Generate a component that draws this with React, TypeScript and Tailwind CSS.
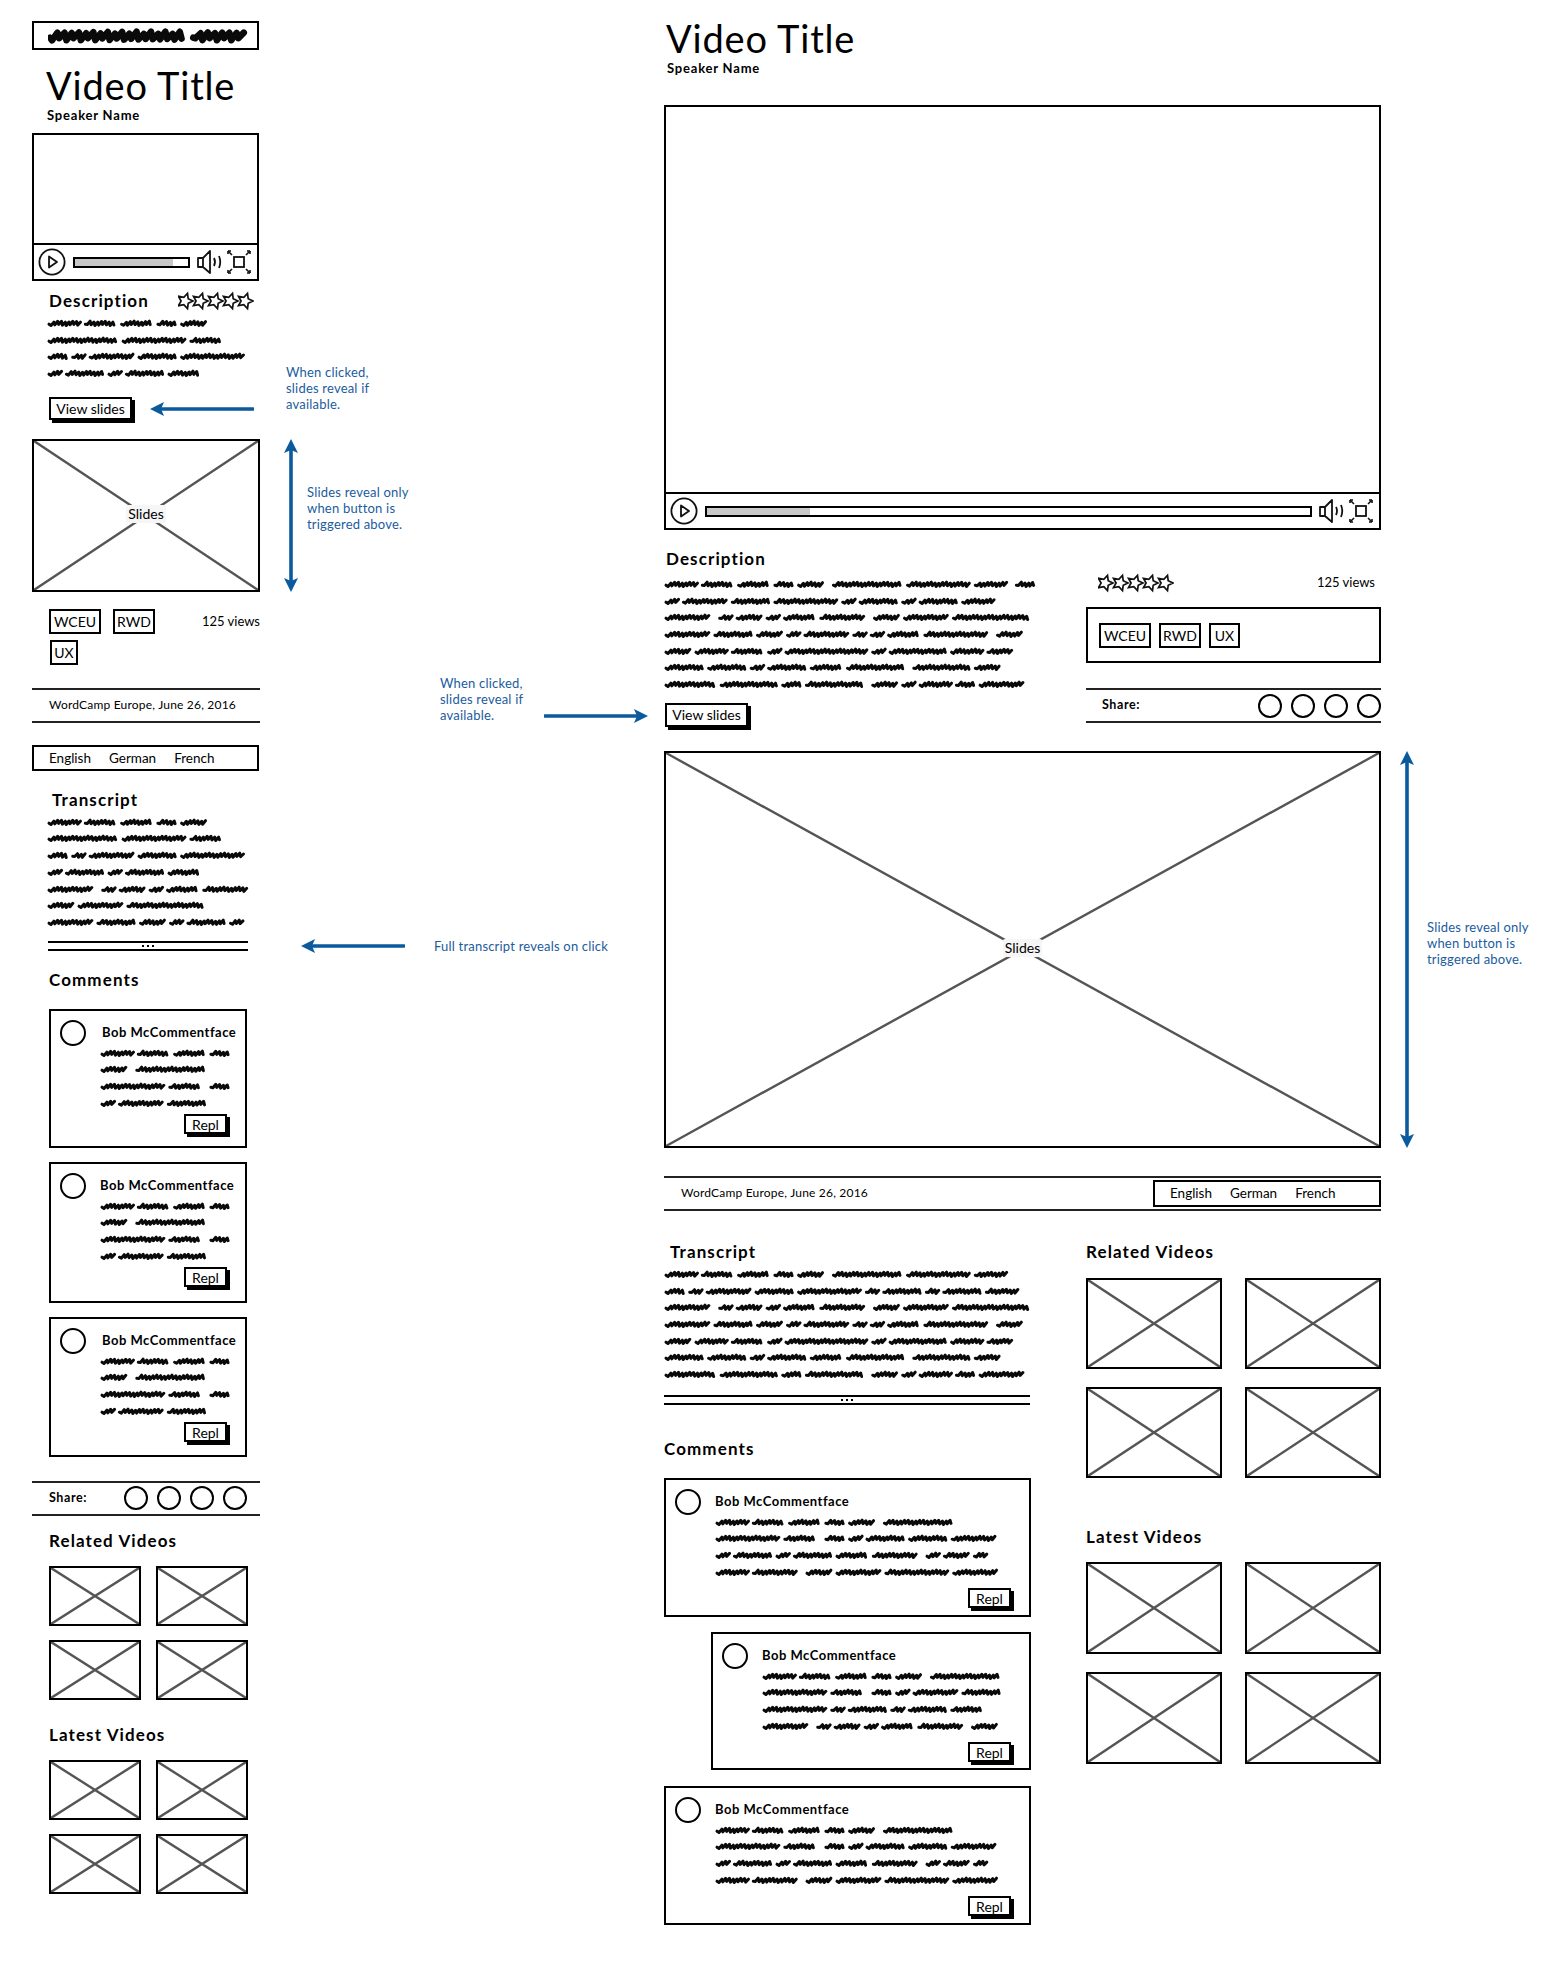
import React from 'react';

const BLUE = '#0b5a9e';

// Redacted body copy in the wireframe is a scribble, one stroke per word.
// A double space in the text stands for the wider gap after a sentence.
const Scribble = ({ text, unit = 6.3, gap = 4.8, amp = 1.6, weight = 3, height = 17, step = 1.9 }: { text: string; unit?: number; gap?: number; amp?: number; weight?: number; height?: number; step?: number }) => {
  let x = 2;
  const mid = height / 2;
  const paths: string[] = [];
  text.split(' ').forEach((word) => {
    if (!word) {
      x += gap;
      return;
    }
    const len = word.length * unit;
    let d = `M${x.toFixed(1)} ${(mid + amp * 0.5).toFixed(1)}`;
    let i = 0;
    for (let p = x + 2; p < x + len - 1; p += step) {
      // lumpy baseline with forward-leaning teeth, like fast handwriting
      const lump = Math.sin(p * 0.42) * amp * 0.35;
      const y = i % 2 ? mid + lump - amp : mid + lump + amp;
      const lean = i % 2 ? step * 0.5 : 0;
      d += ` L${(p + lean).toFixed(1)} ${y.toFixed(1)}`;
      i++;
    }
    paths.push(d);
    x += len + gap;
  });
  return (
    <svg width={x} height={height} className="block shrink-0">
      {paths.map((d, i) => (
        <path key={i} d={d} fill="none" stroke="#0a0a0a" strokeWidth={weight} strokeLinecap="round" strokeLinejoin="round" />
      ))}
    </svg>
  );
};

const ScribbleBlock = ({ lines }: { lines: string[] }) => (
  <div className="flex flex-col">
    {lines.map((l, i) => (
      <Scribble key={i} text={l} height={16.7} />
    ))}
  </div>
);

const Stars = () => {
  const star = (cx: number) => {
    const pts: string[] = [];
    for (let i = 0; i < 10; i++) {
      const r = i % 2 ? 3.9 : 8;
      const a = (i * Math.PI) / 5;
      pts.push(`${(cx + r * Math.cos(a)).toFixed(1)},${(10 + r * Math.sin(a)).toFixed(1)}`);
    }
    return pts.join(' ');
  };
  return (
    <svg width="76" height="20" className="block">
      {[7, 22, 37, 52, 67].map((c) => (
        <polygon key={c} points={star(c)} fill="none" stroke="#111" strokeWidth="1.7" />
      ))}
    </svg>
  );
};

const PlayCircle = () => (
  <svg width="28" height="28" viewBox="0 0 28 28" className="block shrink-0">
    <circle cx="14" cy="14" r="12.6" fill="none" stroke="#111" strokeWidth="1.8" />
    <path d="M11 8.5 L19 14 L11 19.5 Z" fill="none" stroke="#111" strokeWidth="1.8" strokeLinejoin="round" />
  </svg>
);

const VolumeIcon = () => (
  <svg width="26" height="24" viewBox="0 0 26 24" className="block shrink-0">
    <path d="M1 8 L6 8 L13 1 L13 23 L6 17 L1 17 Z M6 8 L6 17" fill="none" stroke="#111" strokeWidth="1.8" strokeLinejoin="round" />
    <path d="M17 8 Q19 12 17 16" fill="none" stroke="#111" strokeWidth="1.8" />
    <path d="M22 6 Q24.5 12 22 18" fill="none" stroke="#111" strokeWidth="1.8" />
  </svg>
);

const FullscreenIcon = () => (
  <svg width="24" height="24" viewBox="0 0 24 24" className="-ml-[3px] block shrink-0">
    <rect x="7" y="7" width="10" height="10" fill="none" stroke="#111" strokeWidth="1.8" />
    <path d="M1 1 L5 5 M23 1 L19 5 M1 23 L5 19 M23 23 L19 19" stroke="#111" strokeWidth="1.6" />
    <path d="M1 1 L1 4 M1 1 L4 1 M23 1 L20 1 M23 1 L23 4 M1 23 L1 20 M1 23 L4 23 M23 23 L20 23 M23 23 L23 20" stroke="#111" strokeWidth="1.6" />
  </svg>
);

const VideoPlayer = ({ progress, className }: { progress: number; className: string }) => (
  <div className={`flex flex-col border-2 border-black bg-white ${className}`}>
    <div className="flex-1" />
    <div className="flex h-[36px] items-center gap-[7px] border-t-2 border-black pl-[4px] pr-[6px]">
      <PlayCircle />
      <div className="h-[11px] flex-1 border-2 border-black bg-white">
        <div className="h-full bg-[#c8c8c8]" style={{ width: `${progress}%` }} />
      </div>
      <VolumeIcon />
      <FullscreenIcon />
    </div>
  </div>
);

const Placeholder = ({ label, className }: { label?: string; className: string }) => (
  <div className={`relative border-2 border-black bg-white ${className}`}>
    <svg viewBox="0 0 100 100" preserveAspectRatio="none" className="absolute inset-0 h-full w-full">
      <path d="M0 0 L100 100 M100 0 L0 100" stroke="#555" strokeWidth="2.4" vectorEffect="non-scaling-stroke" fill="none" />
    </svg>
    {label && (
      <div className="absolute inset-0 flex items-center justify-center">
        <span className="-mt-[2px] rounded-[2px] bg-[#f6f6f6] px-[2px] text-[14px] leading-[18px]">{label}</span>
      </div>
    )}
  </div>
);

const Button = ({ label, className }: { label: string; className: string }) => (
  <div className={`flex items-center justify-center border-2 border-black bg-white text-[14px] shadow-[3px_3px_0_#000] ${className}`}>{label}</div>
);

const Tag = ({ label, className }: { label: string; className: string }) => (
  <div className={`flex h-[25px] items-center justify-center border-2 border-black bg-white text-[14px] ${className}`}>{label}</div>
);

const Heading = ({ children, className = '' }: { children: React.ReactNode; className?: string }) => (
  <div className={`h-[22px] text-[17px] font-bold leading-[22px] tracking-[1.1px] ${className}`}>{children}</div>
);

const Title = ({ className }: { className: string }) => (
  <div className={`h-[38px] text-[38px] leading-[38px] tracking-[0.8px] ${className}`}>Video Title</div>
);

const Speaker = ({ className }: { className: string }) => (
  <div className={`h-[16px] text-[13px] font-bold leading-[16px] tracking-[0.8px] ${className}`}>Speaker Name</div>
);

const Languages = ({ className }: { className: string }) => (
  <div className={`flex items-center border-2 border-black bg-white text-[13.5px] ${className}`}>
    <span className="ml-[15px]">English</span>
    <span className="ml-[18px]">German</span>
    <span className="ml-[18px]">French</span>
  </div>
);

const ShareBar = ({ className }: { className: string }) => (
  <div className={`flex h-[35px] items-center border-y-2 border-[#222] ${className}`}>
    <span className="text-[12.5px] font-bold tracking-[0.6px]">Share:</span>
    <div className="ml-auto flex gap-[9px]">
      {[0, 1, 2, 3].map((i) => (
        <div key={i} className="h-[24px] w-[24px] rounded-full border-2 border-black" />
      ))}
    </div>
  </div>
);

const Reveal = ({ className }: { className: string }) => (
  <div className={`relative h-[10px] border-y-2 border-black ${className}`}>
    <div className="absolute inset-0 flex items-center justify-center gap-[3px]">
      {[0, 1, 2].map((i) => (
        <span key={i} className="h-[2px] w-[2px] bg-black" />
      ))}
    </div>
  </div>
);

const Comment = ({ lines, className, nameClass = '', replyClass = 'mt-[3px]' }: { lines: string[]; className: string; nameClass?: string; replyClass?: string }) => (
  <div className={`flex border-2 border-black bg-white pl-[9px] pr-[18px] pt-[9px] ${className}`}>
    <div className="h-[26px] w-[26px] shrink-0 rounded-full border-2 border-black" />
    <div className="ml-[14px] flex min-w-0 flex-1 flex-col">
      <div className={`mt-[2px] h-[20px] whitespace-nowrap text-[13px] font-bold leading-[20px] tracking-[0.5px] ${nameClass}`}>Bob McCommentface</div>
      <div className="mt-[3px]">
        <ScribbleBlock lines={lines} />
      </div>
      <div className={`flex justify-end ${replyClass}`}>
        <Button label="Repl" className="h-[20px] w-[43px]" />
      </div>
    </div>
  </div>
);

const ThumbGrid = ({ className, cellClass }: { className: string; cellClass: string }) => (
  <div className={`grid grid-cols-2 ${className}`}>
    {[0, 1, 2, 3].map((i) => (
      <Placeholder key={i} className={cellClass} />
    ))}
  </div>
);

const Note = ({ lines, className }: { lines: string[]; className: string }) => (
  <div className={`absolute whitespace-nowrap text-[13px] leading-[16px] tracking-[0.2px] text-[#1b5c9e] ${className}`}>
    {lines.map((l) => (
      <div key={l}>{l}</div>
    ))}
  </div>
);

// Annotation arrows sit on the free canvas between the two layouts
const ArrowH = ({ dir, className }: { dir: 'left' | 'right'; className: string }) => (
  <svg viewBox="0 0 104 16" className={`absolute h-[16px] w-[104px] ${className}`}>
    {dir === 'left' ? (
      <>
        <path d="M6 8 L103 8" stroke={BLUE} strokeWidth="3.6" strokeLinecap="round" />
        <path d="M0 8 L14 1 L11 8 L14 15 Z" fill={BLUE} />
      </>
    ) : (
      <>
        <path d="M1 8 L98 8" stroke={BLUE} strokeWidth="3.6" strokeLinecap="round" />
        <path d="M104 8 L90 1 L93 8 L90 15 Z" fill={BLUE} />
      </>
    )}
  </svg>
);

const ArrowV = ({ className }: { className: string }) => (
  <svg viewBox="0 0 16 100" preserveAspectRatio="none" className={`absolute w-[16px] ${className}`}>
    <path d="M8 2 L8 98" stroke={BLUE} strokeWidth="3.6" vectorEffect="non-scaling-stroke" />
  </svg>
);

const ArrowCap = ({ up, className }: { up: boolean; className: string }) => (
  <svg viewBox="0 0 16 14" className={`absolute h-[14px] w-[16px] ${className}`}>
    <path d={up ? 'M8 0 L15 14 L8 11 L1 14 Z' : 'M8 14 L15 0 L8 3 L1 0 Z'} fill={BLUE} />
  </svg>
);

const descShort = ['lorem ipsum dolor sit amet', 'consectetur adipiscing elit.', 'Sed do eiusmod tempor incididunt', 'ut labore et dolore magna'];
const transcriptShort = [
  ...descShort,
  'aliqua.  Ut enim ad minim veniam,',
  'quis nostrud exercitation',
  'ullamco labori nisi ut aliqui ex',
];
// word lengths only set the stroke widths, so a few are clipped to fit the reference
const longTail = [
  'aliqua.  Ut enim ad minim veniam,  quis nostrud exercitation',
  'ullamco labori nisi ut aliquip ex ea commo consequat.  Duis',
  'aute irure dolor in reprehenderit in voluptate velit esse',
  'cillum dolore eu fugiat nulla pariatur.  Excepteur sint',
  'occaecat cupidatat non proident,  sunt in culpa qui officia',
];
const descLong = [
  'lorem ipsum dolor sit amet  consectetur adipiscing elit.  Sed',
  'do eiusmod tempor incididunt ut labore et dolore magna',
  ...longTail,
];
const transcriptLong = [
  'lorem ipsum dolor sit amet  consectetur adipiscing elit.',
  'Sed do eiusmod tempor incididunt ut labore et dolore magna',
  ...longTail,
];
const commentShort = ['lorem ipsum dolor sit', 'amet  consectetur', 'adipiscing elit.  Sed', 'do eiusmod tempor'];
const commentWide = [
  'lorem ipsum dolor sit amet  consectetur',
  'adipiscing elit.  Sed do eiusmo tempor incidid',
  'ut labore et dolore magna aliqua.  Ut enim ad',
  'minim veniam,  quis nostrud exercitati ullamco',
];
const commentNested = [
  'lorem ipsum dolor sit amet  consectetur',
  'adipiscing elit.  Sed do eiusmod tempor',
  'incididunt ut labore et dolore magna',
  'aliqua.  Ut enim ad minim veniam,  quis',
];

const MobileLayout = () => (
  <div className="ml-[32px] mt-[1px] flex w-[228px] shrink-0 flex-col">
    <div className="flex h-[29px] w-[227px] items-center border-2 border-black pl-[14px]">
      <Scribble text="loremipsumdolorsit sitamet" unit={7.4} gap={10} amp={3.2} weight={6.5} height={24} step={3.6} />
    </div>
    <Title className="ml-[14px] mt-[16px]" />
    <Speaker className="ml-[15px] mt-[3px]" />
    <VideoPlayer progress={87} className="mt-[10px] h-[148px] w-[227px]" />
    <div className="mt-[10px] flex h-[20px] items-center justify-between pl-[17px] pr-[6px]">
      <Heading>Description</Heading>
      <Stars />
    </div>
    <div className="ml-[15px] mt-[4px]">
      <ScribbleBlock lines={descShort} />
    </div>
    <Button label="View slides" className="ml-[17px] mt-[15px] h-[23px] w-[83px]" />
    <Placeholder label="Slides" className="mt-[19px] h-[153px] w-[228px]" />
    <div className="mt-[17px] flex h-[25px] items-center pl-[17px]">
      <Tag label="WCEU" className="w-[52px]" />
      <Tag label="RWD" className="ml-[12px] w-[42px]" />
      <span className="ml-auto text-[13px]">125 views</span>
    </div>
    <Tag label="UX" className="ml-[18px] mt-[6px] w-[28px]" />
    <div className="mt-[23px] flex h-[35px] items-center border-y-2 border-[#222] pl-[17px] text-[12px] tracking-[0.2px]">WordCamp Europe, June 26, 2016</div>
    <Languages className="mt-[22px] h-[26px] w-[227px]" />
    <Heading className="ml-[20px] mt-[18px]">Transcript</Heading>
    <div className="ml-[15px] mt-[3px]">
      <ScribbleBlock lines={transcriptShort} />
    </div>
    <Reveal className="ml-[16px] mt-[10px] w-[200px]" />
    <Heading className="ml-[17px] mt-[18px]">Comments</Heading>
    <Comment lines={commentShort} nameClass="ml-[2px]" className="ml-[17px] mt-[18px] h-[139px] w-[198px]" />
    <Comment lines={commentShort} className="ml-[17px] mt-[14px] h-[141px] w-[198px]" />
    <Comment lines={commentShort} nameClass="ml-[2px]" className="ml-[17px] mt-[14px] h-[140px] w-[198px]" />
    <ShareBar className="mt-[24px] pl-[17px] pr-[13px]" />
    <Heading className="ml-[17px] mt-[14px]">Related Videos</Heading>
    <ThumbGrid className="ml-[17px] mt-[14px] w-[199px] gap-x-[15px] gap-y-[14px]" cellClass="h-[60px]" />
    <Heading className="ml-[17px] mt-[24px]">Latest Videos</Heading>
    <ThumbGrid className="ml-[17px] mt-[14px] w-[199px] gap-x-[15px] gap-y-[14px]" cellClass="h-[60px]" />
  </div>
);

const DesktopLayout = () => (
  <div className="-mt-[1px] ml-[404px] flex w-[717px] shrink-0 flex-col">
    <Title className="ml-[2px]" />
    <Speaker className="ml-[3px] mt-[3px]" />
    <VideoPlayer progress={17} className="mt-[29px] h-[425px]" />
    <div className="mt-[20px] flex justify-between">
      <div className="w-[385px]">
        <Heading className="-mt-[2px] ml-[2px] h-[20px] leading-[20px]">Description</Heading>
        <div className="mt-[6px]">
          <ScribbleBlock lines={descLong} />
        </div>
        <Button label="View slides" className="ml-[1px] mt-[10px] h-[24px] w-[83px]" />
      </div>
      <div className="w-[295px]">
        <div className="mt-[23px] flex h-[20px] items-center justify-between pl-[12px] pr-[6px]">
          <Stars />
          <span className="text-[13px]">125 views</span>
        </div>
        <div className="mt-[14px] flex h-[56px] items-center gap-[8px] border-2 border-black pl-[11px]">
          <Tag label="WCEU" className="w-[52px]" />
          <Tag label="RWD" className="w-[42px]" />
          <Tag label="UX" className="w-[31px]" />
        </div>
        <ShareBar className="mt-[25px] pl-[16px]" />
      </div>
    </div>
    <Placeholder label="Slides" className="mt-[24px] h-[397px]" />
    <div className="mt-[28px] flex h-[35px] items-center justify-between border-y-2 border-[#222] pl-[17px]">
      <span className="text-[12px] tracking-[0.2px]">WordCamp Europe, June 26, 2016</span>
      <Languages className="h-[27px] w-[228px]" />
    </div>
    <div className="flex justify-between">
      <div className="w-[367px]">
        <Heading className="ml-[6px] mt-[30px]">Transcript</Heading>
        <div className="mt-[3px]">
          <ScribbleBlock lines={transcriptLong} />
        </div>
        <Reveal className="mt-[12px] w-[366px]" />
        <Heading className="mt-[33px]">Comments</Heading>
        <Comment lines={commentWide} replyClass="mt-[8px]" className="mt-[18px] h-[139px]" />
        <Comment lines={commentNested} replyClass="mt-[8px]" className="ml-[47px] mt-[15px] h-[138px]" />
        <Comment lines={commentWide} replyClass="mt-[8px]" className="mt-[16px] h-[139px]" />
      </div>
      <div className="w-[295px]">
        <Heading className="mt-[30px]">Related Videos</Heading>
        <ThumbGrid className="mt-[15px] gap-x-[23px] gap-y-[18px]" cellClass="h-[91px]" />
        <Heading className="mt-[48px]">Latest Videos</Heading>
        <ThumbGrid className="mt-[14px] gap-x-[23px] gap-y-[18px]" cellClass="h-[92px]" />
      </div>
    </div>
  </div>
);

export default function App() {
  return (
    <div className="relative h-[1962px] w-[1567px] overflow-hidden bg-white pt-[20px] font-['Lato',sans-serif] text-black">
      <div className="flex">
        <MobileLayout />
        <DesktopLayout />
      </div>

      <Note lines={['When clicked,', 'slides reveal if', 'available.']} className="left-[286px] top-[364px]" />
      <ArrowH dir="left" className="left-[150px] top-[401px]" />
      <Note lines={['Slides reveal only', 'when button is', 'triggered above.']} className="left-[307px] top-[484px]" />
      <ArrowV className="left-[283px] top-[442px] h-[147px]" />
      <ArrowCap up className="left-[283px] top-[439px]" />
      <ArrowCap up={false} className="left-[283px] top-[578px]" />

      <Note lines={['When clicked,', 'slides reveal if', 'available.']} className="left-[440px] top-[675px]" />
      <ArrowH dir="right" className="left-[544px] top-[708px]" />
      <Note lines={['Full transcript reveals on click']} className="left-[434px] top-[938px]" />
      <ArrowH dir="left" className="left-[301px] top-[938px]" />

      <Note lines={['Slides reveal only', 'when button is', 'triggered above.']} className="left-[1427px] top-[919px]" />
      <ArrowV className="left-[1399px] top-[754px] h-[391px]" />
      <ArrowCap up className="left-[1399px] top-[751px]" />
      <ArrowCap up={false} className="left-[1399px] top-[1134px]" />
    </div>
  );
}
